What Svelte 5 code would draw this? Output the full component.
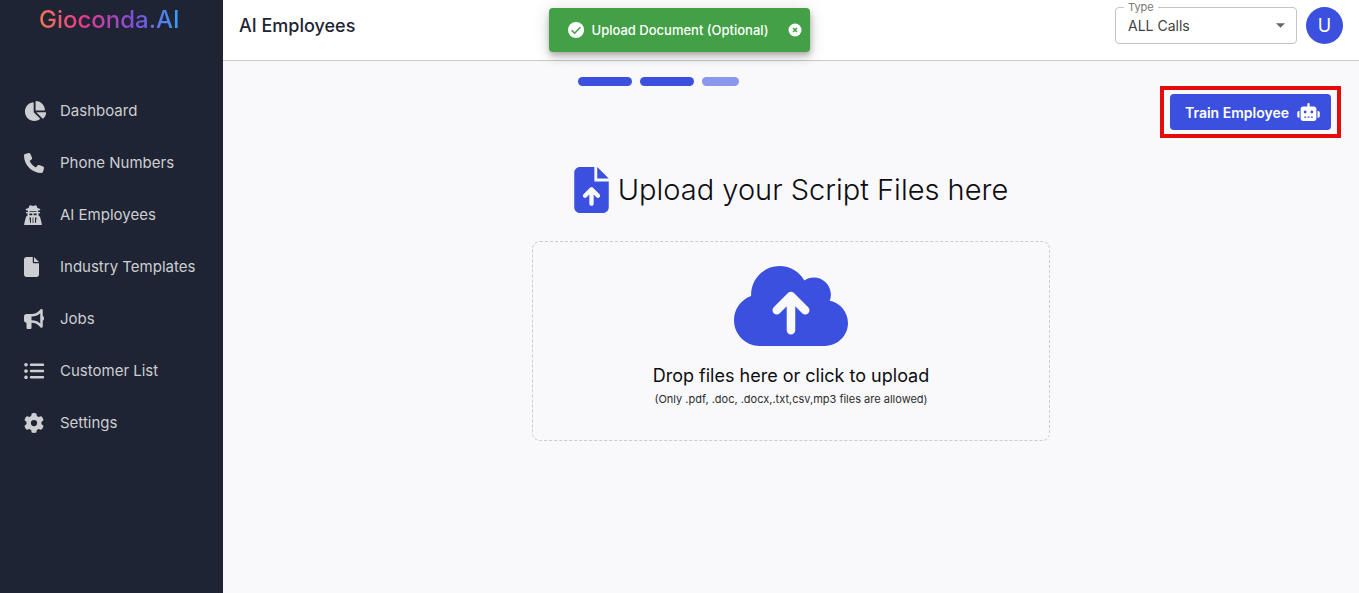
<script lang="ts">
  const nav = [
    {
      label: 'Dashboard',
      box: '-24 0 544 512',
      d: 'M527.79 288H290.5l158.03 158.03c6.04 6.04 15.98 6.53 22.19.68 38.7-36.46 65.32-85.61 73.13-140.86 1.34-9.46-6.51-17.85-16.06-17.85zm-15.83-64.8C503.72 103.74 408.26 8.28 288.8.04 279.68-.59 272 7.1 272 16.24V240h223.77c9.14 0 16.82-7.68 16.19-16.8zM224 288V50.71c0-9.55-8.39-17.4-17.84-16.06C86.99 51.49-4.1 155.6.14 280.37 4.5 408.51 114.83 513.59 243.03 511.98c50.4-.63 96.97-16.87 135.26-44.03 7.9-5.6 8.42-17.23 1.57-24.08L224 288z'
    },
    {
      label: 'Phone Numbers',
      box: '0 0 512 512',
      d: 'M164.9 24.6c-7.7-18.6-28-28.5-47.4-23.2l-88 24C12.1 30.2 0 46 0 64C0 311.4 200.6 512 448 512c18 0 33.8-12.1 38.6-29.5l24-88c5.3-19.4-4.6-39.7-23.2-47.4l-96-40c-16.3-6.8-35.2-2.1-46.3 11.6L304.7 368C234.3 334.7 177.3 277.7 144 207.3L193.3 167c13.7-11.2 18.4-30 11.6-46.3l-40-96z'
    },
    {
      label: 'AI Employees',
      box: '0 0 18 20',
      d: 'M5.4 .8Q6.2-.2 7.2.4L9 .9l1.800-.5Q11.800-.2 12.600.8L13.400 3Q16.500 3.500 16.500 4.500 16.500 5.400 14 5.700V7H16V8.200H14.500V10.500Q16 11 16.500 13.500L17.800 19V20H.200V19L1.500 13.500Q2 11 3.500 10.500V8.200H2V7H4V5.700Q1.500 5.400 1.500 4.500 1.500 3.500 4.600 3ZM5.500 5.900V6.700H12.500V5.900ZM5.400 8.500V10.300H8.300V8.500ZM9.700 8.500V10.300H12.600V8.500ZM5.400 12.500 6.200 18H7V12.500ZM8.600 12.500V18H9.400V12.500ZM11 12.500V18H11.800L12.600 12.500Z'
    },
    {
      label: 'Industry Templates',
      box: '0 0 384 512',
      d: 'M0 64C0 28.7 28.7 0 64 0H224V128c0 17.7 14.3 32 32 32H384V448c0 35.3-28.7 64-64 64H64c-35.3 0-64-28.7-64-64V64zm384 64H256V0L384 128z'
    },
    {
      label: 'Jobs',
      box: '0 0 512 512',
      d: 'M480 32c0-12.9-7.8-24.6-19.8-29.6s-25.7-2.2-34.9 6.9L381.7 53c-48 48-113.1 75-181 75H192 160 64c-35.3 0-64 28.7-64 64v96c0 35.3 28.700 64 64 64l0 128c0 17.700 14.300 32 32 32h64c17.700 0 32-14.300 32-32V352l8.700 0c67.900 0 133 27 181 75l43.600 43.600c9.200 9.200 22.900 11.900 34.900 6.900s19.800-16.600 19.800-29.600V300.400c18.600-8.800 32-32.500 32-60.400s-13.400-51.600-32-60.400V32zm-64 76.700V240 371.300C357.200 317.800 280.500 288 200.700 288H192V192h8.700c79.800 0 156.500-29.800 215.300-83.300z'
    },
    {
      label: 'Customer List',
      box: '0 0 20 20',
      d: 'M2 1.900a1.800 1.800 0 1 0 .01 0zM2 8.200a1.800 1.800 0 1 0 .01 0zM2 14.500a1.800 1.800 0 1 0 .01 0zM7 2.500h12a1.200 1.200 0 0 1 0 2.400H7a1.200 1.200 0 0 1 0-2.400zM7 8.800h12a1.200 1.200 0 0 1 0 2.400H7a1.200 1.200 0 0 1 0-2.400zM7 15.100h12a1.200 1.200 0 0 1 0 2.400H7a1.200 1.200 0 0 1 0-2.400z'
    },
    {
      label: 'Settings',
      box: '0 0 512 512',
      d: 'M495.9 166.6c3.2 8.7 .5 18.4-6.4 24.6l-43.3 39.4c1.1 8.3 1.7 16.8 1.7 25.4s-.6 17.1-1.7 25.4l43.3 39.4c6.9 6.2 9.6 15.9 6.4 24.6c-4.4 11.9-9.7 23.3-15.8 34.3l-4.7 8.1c-6.6 11-14 21.4-22.1 31.2c-5.9 7.2-15.7 9.6-24.5 6.8l-55.7-17.7c-13.4 10.3-28.2 18.9-44 25.4l-12.5 57.1c-2 9.1-9 16.3-18.2 17.8c-13.8 2.3-28 3.5-42.5 3.5s-28.7-1.2-42.5-3.5c-9.2-1.5-16.2-8.7-18.2-17.8l-12.5-57.1c-15.8-6.5-30.6-15.1-44-25.4L83.1 425.9c-8.8 2.8-18.6 .3-24.5-6.8c-8.1-9.8-15.5-20.2-22.1-31.2l-4.7-8.1c-6.1-11-11.4-22.4-15.8-34.3c-3.2-8.7-.5-18.4 6.4-24.6l43.3-39.4C64.6 273.1 64 264.6 64 256s.6-17.1 1.7-25.4L22.4 191.2c-6.900-6.200-9.600-15.900-6.400-24.600c4.400-11.900 9.700-23.300 15.800-34.300l4.700-8.100c6.600-11 14-21.400 22.100-31.200c5.900-7.200 15.700-9.600 24.500-6.800l55.700 17.700c13.400-10.300 28.200-18.900 44-25.400l12.500-57.100c2-9.100 9-16.300 18.200-17.800C227.300 1.200 241.500 0 256 0s28.700 1.200 42.500 3.500c9.200 1.500 16.200 8.700 18.200 17.800l12.500 57.100c15.800 6.500 30.600 15.100 44 25.400l55.700-17.700c8.800-2.800 18.600-.3 24.500 6.800c8.100 9.800 15.500 20.200 22.100 31.200l4.700 8.100c6.100 11 11.400 22.400 15.800 34.300zM256 336a80 80 0 1 0 0-160 80 80 0 1 0 0 160z'
    }
  ];

  let toastOpen = $state(true);
</script>

<div class="app">
  <aside class="sidebar">
    <div class="brand">Gioconda.AI</div>
    <nav>
      {#each nav as item}
        <a href="#top">
          <svg viewBox={item.box} aria-hidden="true" preserveAspectRatio="xMinYMax meet">
            <path fill="currentColor" fill-rule="evenodd" d={item.d} />
          </svg>
          <span>{item.label}</span>
        </a>
      {/each}
    </nav>
  </aside>

  <div class="page">
    <header>
      <h1>AI Employees</h1>
      <div class="account">
        <div class="field">
          <label for="call-type">Type</label>
          <select id="call-type">
            <option>ALL Calls</option>
          </select>
          <svg class="caret" viewBox="0 0 10 5" aria-hidden="true"><path fill="#666" d="M0 0h10L5 5z" /></svg>
        </div>
        <button class="avatar" type="button">U</button>
      </div>
    </header>

    <main>
      <div class="steps">
        <span class="step"></span>
        <span class="step"></span>
        <span class="step next"></span>
      </div>

      <div class="actions">
        <div class="highlight">
          <button class="train" type="button">
            Train Employee
            <svg viewBox="0 0 640 512" aria-hidden="true">
              <path fill="currentColor" d="M320 0c17.700 0 32 14.300 32 32V96H472c39.800 0 72 32.200 72 72V440c0 39.800-32.200 72-72 72H168c-39.800 0-72-32.200-72-72V168c0-39.800 32.200-72 72-72H288V32c0-17.700 14.300-32 32-32zM208 384c-8.800 0-16 7.200-16 16s7.200 16 16 16h32c8.800 0 16-7.200 16-16s-7.200-16-16-16H208zm96 0c-8.800 0-16 7.200-16 16s7.200 16 16 16h32c8.800 0 16-7.200 16-16s-7.200-16-16-16H304zm96 0c-8.800 0-16 7.200-16 16s7.200 16 16 16h32c8.800 0 16-7.200 16-16s-7.200-16-16-16H400zM264 256a40 40 0 1 0-80 0 40 40 0 1 0 80 0zm152 40a40 40 0 1 0 0-80 40 40 0 1 0 0 80zM48 224H64V416H48c-26.500 0-48-21.500-48-48V272c0-26.500 21.500-48 48-48zm544 0c26.500 0 48 21.500 48 48v96c0 26.500-21.500 48-48 48H576V224h16z" />
            </svg>
          </button>
        </div>
      </div>

      <h2>
        <svg viewBox="0 0 384 512" aria-hidden="true">
          <path fill="currentColor" d="M64 0C28.700 0 0 28.700 0 64V448c0 35.300 28.700 64 64 64H320c35.300 0 64-28.700 64-64V160H224V0H64zM256 0V128H384L256 0zM216 408c0 13.300-10.700 24-24 24s-24-10.700-24-24V305.900l-31 31c-9.400 9.400-24.600 9.400-33.900 0s-9.400-24.600 0-33.900l72-72c9.400-9.400 24.600-9.400 33.900 0l72 72c9.400 9.400 9.400 24.600 0 33.900s-24.600 9.400-33.900 0l-31-31V408z" />
        </svg>
        Upload your Script Files here
      </h2>

      <label class="dropzone">
        <input type="file" multiple accept=".pdf,.doc,.docx,.txt,.csv,.mp3" />
        <svg viewBox="0 32 640 448" aria-hidden="true">
          <path fill="currentColor" d="M144 480C64.500 480 0 415.500 0 336c0-62.800 40.200-116.200 96.200-135.900c-.1-2.700-.2-5.400-.2-8.100c0-88.400 71.600-160 160-160c59.300 0 111 32.200 138.700 80.200C409.900 102 428.300 96 448 96c53 0 96 43 96 96c0 12.200-2.300 23.800-6.400 34.600C596 238.400 640 290.100 640 352c0 70.700-57.300 128-128 128H144zm79-217c-9.400 9.400-9.400 24.600 0 33.900s24.600 9.400 33.900 0l39-39V392c0 13.300 10.700 24 24 24s24-10.700 24-24V257.900l39 39c9.400 9.400 24.600 9.400 33.900 0s9.400-24.600 0-33.900l-80-80c-9.400-9.400-24.600-9.400-33.900 0l-80 80z" />
        </svg>
        <span class="prompt">Drop files here or click to upload</span>
        <span class="hint">(Only .pdf, .doc, .docx,.txt,csv,mp3 files are allowed)</span>
      </label>
    </main>
  </div>

  {#if toastOpen}
    <div class="toast" role="status">
      <svg class="check" viewBox="0 0 16 16" aria-hidden="true">
        <circle cx="8" cy="8" r="8" fill="#fff" />
        <path d="M3.600 8.200l3 3 5.800-6" fill="none" stroke="#43a047" stroke-width="1.600" />
      </svg>
      <span>Upload Document (Optional)</span>
      <button type="button" aria-label="Close" onclick={() => (toastOpen = false)}>
        <svg viewBox="0 0 14 14" aria-hidden="true">
          <circle cx="7" cy="7" r="6.500" fill="#fff" />
          <path d="M5 5l4 4M9 5l-4 4" stroke="#43a047" stroke-width="1.600" />
        </svg>
      </button>
    </div>
  {/if}
</div>

<style>
  :global(body) {
    margin: 0;
    background: #f9f9fc;
  }

  .app {
    display: flex;
    min-height: 100vh;
    position: relative;
    font-family: Inter, 'Open Sans', sans-serif;
    color: #0d0d0f;
  }

  .app * {
    box-sizing: border-box;
  }

  button,
  select {
    font-family: inherit;
  }

  .sidebar {
    flex: 0 0 223px;
    background: #1e2433;
  }

  .brand {
    width: max-content;
    margin: 4px 0 48px 39px;
    font-size: 24px;
    line-height: 32px;
    font-weight: 500;
    background: linear-gradient(90deg, #f4764f 0%, #e8388c 32%, #7c4fdc 68%, #3b9cf5 100%);
    background-clip: text;
    -webkit-background-clip: text;
    color: transparent;
  }

  nav a {
    display: flex;
    align-items: center;
    height: 52px;
    padding-left: 24px;
    color: #cdced1;
    font-size: 15px;
    text-decoration: none;
  }

  nav svg {
    width: 22px;
    height: 22px;
    padding-top: 2px;
    margin-right: 14px;
  }

  .page {
    flex: 1;
    min-width: 0;
  }

  header {
    display: flex;
    align-items: center;
    justify-content: space-between;
    height: 61px;
    padding: 0 16px 9px;
    background: #fff;
    border-bottom: 1px solid #c9c9cb;
  }

  h1 {
    margin: 0;
    font-size: 18px;
    font-weight: 500;
    color: #1e2433;
  }

  .account {
    display: flex;
    align-items: center;
    gap: 9px;
  }

  .field {
    position: relative;
    width: 182px;
  }

  .field label {
    position: absolute;
    top: -7px;
    left: 9px;
    padding: 0 4px;
    background: #fff;
    font-size: 11px;
    line-height: 14px;
    color: #777;
  }

  .field select {
    display: block;
    appearance: none;
    width: 100%;
    height: 37px;
    padding: 0 12px;
    border: 1px solid #c4c4c4;
    border-radius: 4px;
    background: #fff;
    color: #3f3f42;
    font-size: 14px;
  }

  .caret {
    position: absolute;
    top: 16px;
    right: 12px;
    width: 9px;
    height: 5px;
    pointer-events: none;
  }

  .avatar {
    width: 37px;
    height: 37px;
    padding: 0;
    border: 0;
    border-radius: 50%;
    background: #3b50df;
    color: #fff;
    font-size: 18px;
  }

  main {
    display: flex;
    flex-direction: column;
    align-items: center;
    padding: 16px 18px;
  }

  .steps {
    display: flex;
    gap: 8px;
    width: 426px;
    max-width: 100%;
  }

  .step {
    width: 54px;
    height: 9px;
    border-radius: 5px;
    background: #3b50df;
  }

  .step.next {
    width: 37px;
    background: #8b97ec;
  }

  .actions {
    align-self: flex-end;
  }

  .highlight {
    padding: 4px 6px;
    border: 4px solid #e60b0b;
  }

  .train {
    display: flex;
    align-items: center;
    gap: 8px;
    height: 36px;
    padding: 0 11px 0 15px;
    border: 0;
    border-radius: 4px;
    background: #3b50df;
    color: #fff;
    font-size: 14px;
    font-weight: 600;
    white-space: nowrap;
  }

  .train svg {
    width: 23px;
    height: 18px;
  }

  h2 {
    display: flex;
    align-items: center;
    gap: 9px;
    margin: 29px 0 28px;
    font-size: 29px;
    font-weight: 300;
    line-height: 46px;
  }

  h2 svg {
    width: 35px;
    height: 46px;
    color: #3b50df;
  }

  .dropzone {
    display: flex;
    flex-direction: column;
    align-items: center;
    width: 518px;
    max-width: 100%;
    padding: 24px 24px 31px;
    border: 1px dashed #ccc;
    border-radius: 8px;
    cursor: pointer;
  }

  .dropzone input {
    position: absolute;
    width: 1px;
    height: 1px;
    opacity: 0;
  }

  .dropzone svg {
    width: 114px;
    height: 80px;
    margin-bottom: 17px;
    color: #3b50df;
  }

  .prompt {
    font-size: 18px;
    line-height: 26px;
  }

  .hint {
    font-size: 11px;
    line-height: 20px;
    color: #2b2b2e;
  }

  .toast {
    position: absolute;
    top: 8px;
    left: 50%;
    transform: translateX(-50%);
    display: flex;
    align-items: center;
    height: 44px;
    padding: 0 8px 0 19px;
    border-radius: 4px;
    background: #43a047;
    color: #fff;
    font-size: 13px;
    font-weight: 500;
    white-space: nowrap;
    box-shadow: 0 3px 5px -1px rgba(0, 0, 0, 0.2), 0 6px 10px rgba(0, 0, 0, 0.14), 0 1px 18px rgba(0, 0, 0, 0.12);
  }

  .check {
    width: 16px;
    height: 16px;
    margin-right: 8px;
  }

  .toast button {
    display: flex;
    margin-left: 20px;
    padding: 0;
    border: 0;
    background: none;
  }

  .toast button svg {
    width: 14px;
    height: 14px;
  }
</style>
